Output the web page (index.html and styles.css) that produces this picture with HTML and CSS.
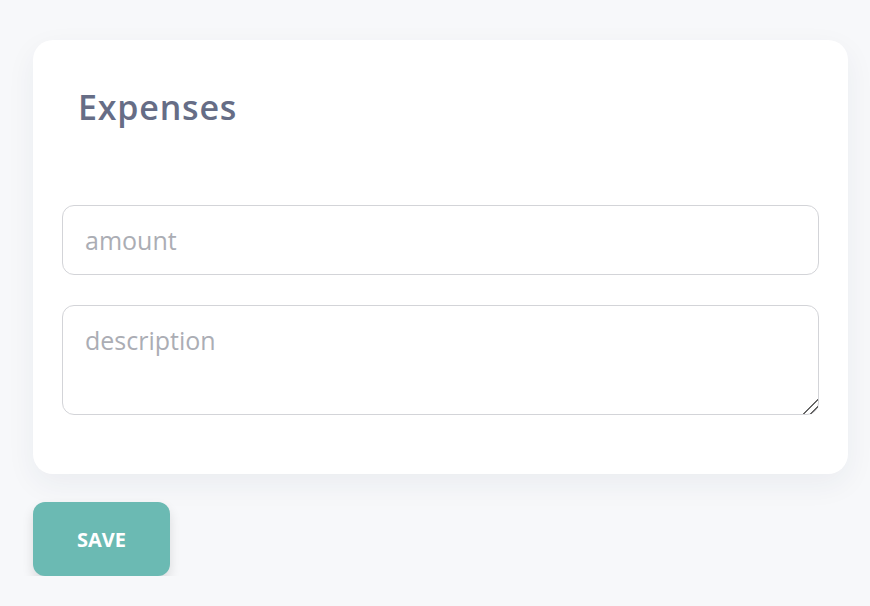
FILE: index.html
```html
<!DOCTYPE html>
<html>
<head>
<link rel="stylesheet" href="styles.css">
</head>
<body>

<form class="expense-form" action="javascript:void(0)">
<div class="card">
	<h1 class="card-title">Expenses</h1>
	<input type="text" class="field" placeholder="amount">
	<textarea class="field field-area" placeholder="description"></textarea>
</div>
<button type="submit" class="save-btn">SAVE</button>
</form>

</body>
</html>
```

FILE: styles.css
```css
html, body {
	margin:0;
	background-color:#f7f8fa;
	font-family:"Open Sans", "Liberation Sans", sans-serif;
}
.expense-form {
	padding:40px 22px 0 33px;
}
.card {
	background-color:#fff;
	border-radius:20px;
	padding:17px 29px 59px 29px;
	box-shadow:0 10px 30px rgba(40, 50, 80, 0.06);
	display:flex;
	flex-direction:column;
}
.card-title {
	font-size:34px;
	font-weight:600;
	letter-spacing:0.8px;
	line-height:44px;
	color:#666d86;
	margin:28px 0 76px 16px;
}
.field {
	font:inherit;
	font-size:25px;
	color:#444;
	border:1px solid #d3d4d8;
	border-radius:12px;
	padding:0 22px;
	height:70px;
	box-sizing:border-box;
	outline:none;
}
.field::placeholder {
	color:#abadb4;
}
.field-area {
	margin-top:30px;
	height:110px;
	padding-top:17px;
	resize:vertical;
}
.field-area::-webkit-resizer {
	background:linear-gradient(135deg, transparent 48%, #666 48%, #666 56%, transparent 56%, transparent 72%, #666 72%, #666 80%, transparent 80%);
}
.save-btn {
	margin-top:28px;
	width:137px;
	height:74px;
	border:none;
	border-radius:12px;
	background-color:#6bbab3;
	color:#fff;
	font:inherit;
	font-size:20px;
	font-weight:700;
	box-shadow:0 6px 12px rgba(0, 0, 0, 0.12);
	cursor:pointer;
}
```
